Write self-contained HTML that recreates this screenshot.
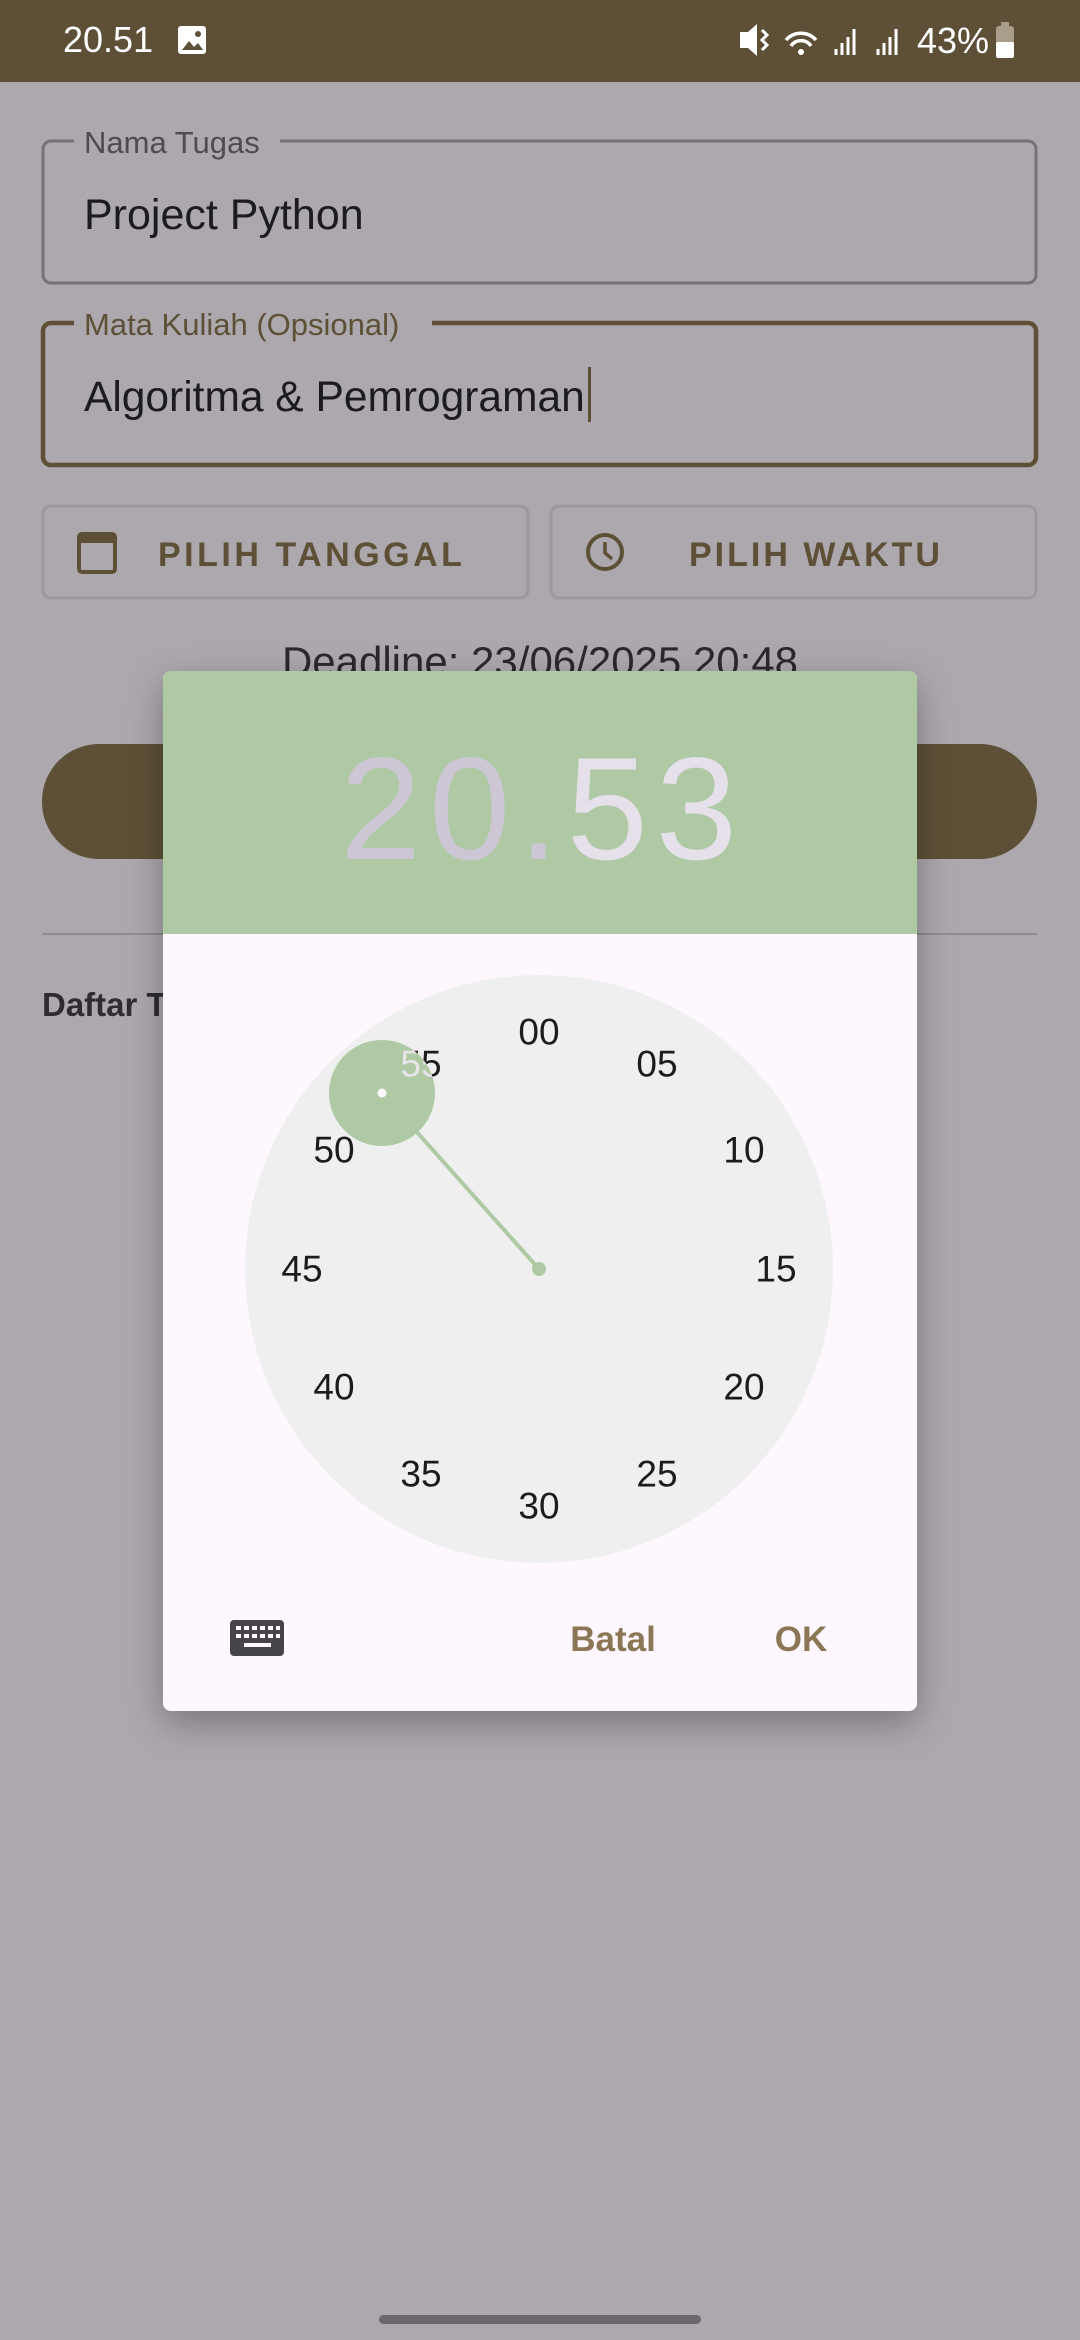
<!DOCTYPE html>
<html><head><meta charset="utf-8"><style>
html,body{margin:0;padding:0;width:1080px;height:2340px;overflow:hidden;background:#aca8ad}
svg{display:block;font-family:"Liberation Sans",sans-serif}
</style></head><body>
<svg width="1080" height="2340" viewBox="0 0 1080 2340" xmlns="http://www.w3.org/2000/svg">
<defs>
<filter id="sh" x="-20%" y="-20%" width="140%" height="140%"><feDropShadow dx="0" dy="12" stdDeviation="18" flood-color="#000" flood-opacity="0.3"/></filter>
<clipPath id="sel"><circle cx="382" cy="1093" r="53"/></clipPath>
</defs>
<rect width="1080" height="2340" fill="#aca8ad"/>
<!-- status bar -->
<rect width="1080" height="82" fill="#5d5036"/>
<text x="63" y="52" font-size="36" fill="#fff">20.51</text>
<rect x="178" y="26" width="28" height="28" rx="3" fill="#fff"/>
<path d="M182 50 l7-9 5 6 4-4 5 7z" fill="#5d5036"/><circle cx="198" cy="34" r="3" fill="#5d5036"/>
<path d="M740 32 h8 l9-8 v32 l-9-8 h-8z" fill="#fff"/>
<path d="M762 30 l5 5-5 5 5 5-5 5" stroke="#fff" stroke-width="3" fill="none"/>
<path d="M786 40 a20 20 0 0 1 30 0 M791 46 a12 12 0 0 1 20 0" stroke="#fff" stroke-width="3.5" fill="none"/>
<circle cx="801" cy="52" r="3" fill="#fff"/>
<path d="M836 55 v-6 M842 55 v-12 M848 55 v-18 M854 55 v-26" stroke="#fff" stroke-width="3"/>
<path d="M878 55 v-6 M884 55 v-12 M890 55 v-18 M896 55 v-26" stroke="#fff" stroke-width="3"/>
<text x="917" y="53" font-size="36" fill="#fff">43%</text>
<rect x="996" y="26" width="18" height="32" rx="3" fill="#a89e89"/>
<rect x="996" y="42" width="18" height="16" rx="2" fill="#fff"/>
<rect x="1001" y="22" width="8" height="5" fill="#a89e89"/>
<!-- field 1 -->
<rect x="43" y="141" width="993" height="142" rx="8" fill="none" stroke="#76727a" stroke-width="3"/>
<rect x="74" y="126" width="206" height="30" fill="#aca8ad"/>
<text x="84" y="153" font-size="31" fill="#4f4b52">Nama Tugas</text>
<text x="84" y="229" font-size="43" fill="#1c1b1e">Project Python</text>
<!-- field 2 -->
<rect x="43" y="323" width="993" height="142" rx="8" fill="none" stroke="#5d5036" stroke-width="4.5"/>
<rect x="74" y="306" width="358" height="32" fill="#aca8ad"/>
<text x="84" y="335" font-size="31" fill="#5d5036">Mata Kuliah (Opsional)</text>
<text x="84" y="411" font-size="42.5" fill="#1c1b1e">Algoritma &amp; Pemrograman</text>
<rect x="588" y="367" width="3" height="55" fill="#5d5036"/>
<!-- buttons -->
<rect x="43" y="506" width="485" height="92" rx="8" fill="none" stroke="#9d98a0" stroke-width="3"/>
<rect x="551" y="506" width="485" height="92" rx="8" fill="none" stroke="#9d98a0" stroke-width="3"/>
<rect x="79" y="534" width="36" height="38" rx="3" fill="none" stroke="#5d5036" stroke-width="4"/>
<rect x="79" y="534" width="36" height="9" fill="#5d5036"/>
<text x="158" y="566" font-size="34" font-weight="bold" letter-spacing="3.5" fill="#5d5036">PILIH TANGGAL</text>
<circle cx="605" cy="552" r="17" fill="none" stroke="#5d5036" stroke-width="4"/>
<path d="M605 542 v11 l7 6" stroke="#5d5036" stroke-width="3.5" fill="none"/>
<text x="689" y="566" font-size="34" font-weight="bold" letter-spacing="3" fill="#5d5036">PILIH WAKTU</text>
<text x="540" y="676" font-size="42" fill="#2a282d" text-anchor="middle">Deadline: 23/06/2025 20:48</text>
<rect x="42" y="744" width="995" height="115" rx="57" fill="#5d5036"/>
<rect x="42" y="933" width="995" height="2" fill="#8e8a90"/>
<text x="42" y="1016" font-size="33" font-weight="bold" fill="#2e2c30">Daftar T</text>
<!-- dialog -->
<g filter="url(#sh)"><rect x="163" y="671" width="754" height="1040" rx="8" fill="#fef8fe"/></g>
<path d="M171 671 h738 a8 8 0 0 1 8 8 v255 h-754 v-255 a8 8 0 0 1 8-8z" fill="#aec9a4"/>
<text x="340" y="859" font-size="146" textLength="397" lengthAdjust="spacing"><tspan fill="#cdc7d5">20.</tspan><tspan fill="#e6e0ea">53</tspan></text>
<circle cx="539" cy="1269" r="294" fill="#efefef"/>
<g font-size="37" fill="#1c1b1e" text-anchor="middle" dominant-baseline="central">
<text x="539" y="1032">00</text><text x="657" y="1064">05</text><text x="744" y="1150">10</text>
<text x="776" y="1269">15</text><text x="744" y="1387">20</text><text x="657" y="1474">25</text>
<text x="539" y="1506">30</text><text x="421" y="1474">35</text><text x="334" y="1387">40</text>
<text x="302" y="1269">45</text><text x="334" y="1150">50</text><text x="421" y="1064">55</text>
</g>
<line x1="539" y1="1269" x2="382" y2="1093" stroke="#aec9a4" stroke-width="4"/>
<circle cx="382" cy="1093" r="53" fill="#aec9a4"/>
<circle cx="539" cy="1269" r="7" fill="#aec9a4"/>
<circle cx="382" cy="1093" r="4.5" fill="#fef8fe"/>
<text x="421" y="1064" font-size="37" fill="#e8e4ea" text-anchor="middle" dominant-baseline="central" clip-path="url(#sel)">55</text>
<!-- keyboard -->
<rect x="230" y="1620" width="54" height="36" rx="4" fill="#46434a"/>
<g fill="#fef8fe">
<rect x="236" y="1626" width="5" height="4"/><rect x="244" y="1626" width="5" height="4"/><rect x="252" y="1626" width="5" height="4"/><rect x="260" y="1626" width="5" height="4"/><rect x="268" y="1626" width="5" height="4"/><rect x="276" y="1626" width="4" height="4"/>
<rect x="236" y="1634" width="5" height="4"/><rect x="244" y="1634" width="5" height="4"/><rect x="252" y="1634" width="5" height="4"/><rect x="260" y="1634" width="5" height="4"/><rect x="268" y="1634" width="5" height="4"/><rect x="276" y="1634" width="4" height="4"/>
<rect x="244" y="1643" width="27" height="4"/></g>
<text x="613" y="1651" font-size="35" font-weight="bold" fill="#8b7755" text-anchor="middle">Batal</text>
<text x="801" y="1651" font-size="35" font-weight="bold" fill="#8b7755" text-anchor="middle">OK</text>
<rect x="379" y="2315" width="322" height="9" rx="4.5" fill="#6a686c"/>
</svg>
</body></html>
